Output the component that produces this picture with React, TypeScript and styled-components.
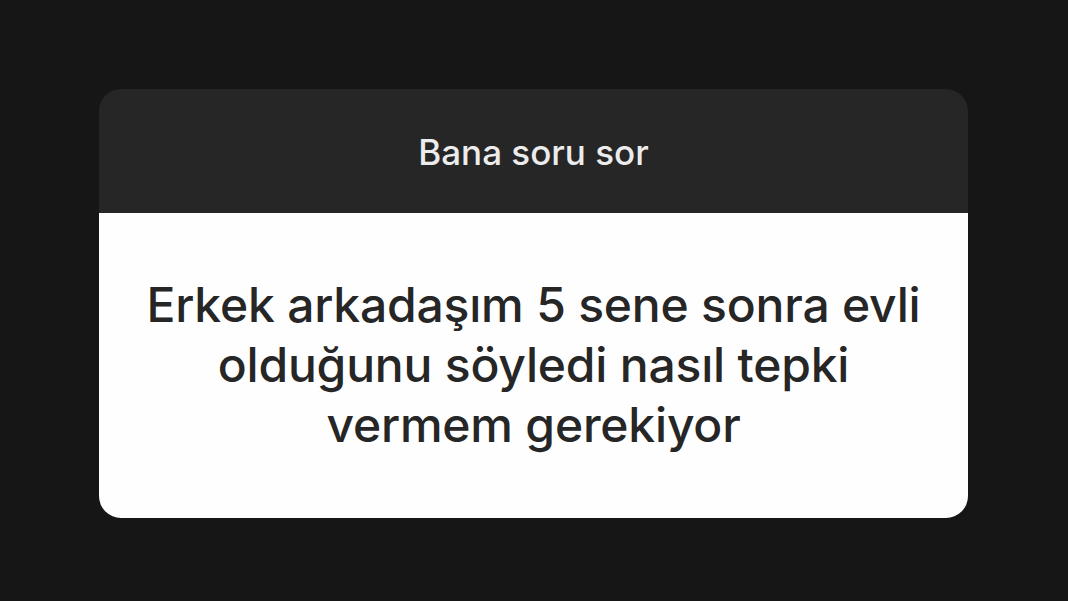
import React from 'react';
import styled, { createGlobalStyle } from 'styled-components';

const GlobalStyle = createGlobalStyle`
  html, body {
    margin: 0;
    padding: 0;
    background-color: #161616;
  }
  body {
    font-family: Inter, 'Noto Sans', 'Liberation Sans', sans-serif;
  }
`;

const Page = styled.div`
  width: 1068px;
  height: 601px;
  background-color: #161616;
  padding-top: 89px;
  padding-left: 99px;
  box-sizing: border-box;
  overflow: hidden;
`;

const Card = styled.div`
  width: 869px;
  border-radius: 22px;
  overflow: hidden;
  display: flex;
  flex-direction: column;
`;

const Header = styled.div`
  height: 124px;
  background-color: #262626;
  display: flex;
  align-items: center;
  justify-content: center;
  color: #ececec;
  font-size: 35px;
  font-weight: 500;
  padding-top: 2px;
  box-sizing: border-box;
`;

const Body = styled.div`
  height: 305px;
  background-color: #fefefe;
  display: flex;
  align-items: center;
  justify-content: center;
`;

const Question = styled.div`
  text-align: center;
  color: #262626;
  font-size: 48px;
  line-height: 60px;
  font-weight: 500;
  letter-spacing: -0.2px;
  margin-top: -2px;
`;

const App = () => {
  return (
    <Page>
      <GlobalStyle />
      <Card>
        <Header>Bana soru sor</Header>
        <Body>
          <Question>
            Erkek arkadaşım 5 sene sonra evli
            <br />
            olduğunu söyledi nasıl tepki
            <br />
            vermem gerekiyor
          </Question>
        </Body>
      </Card>
    </Page>
  );
};

export default App;
